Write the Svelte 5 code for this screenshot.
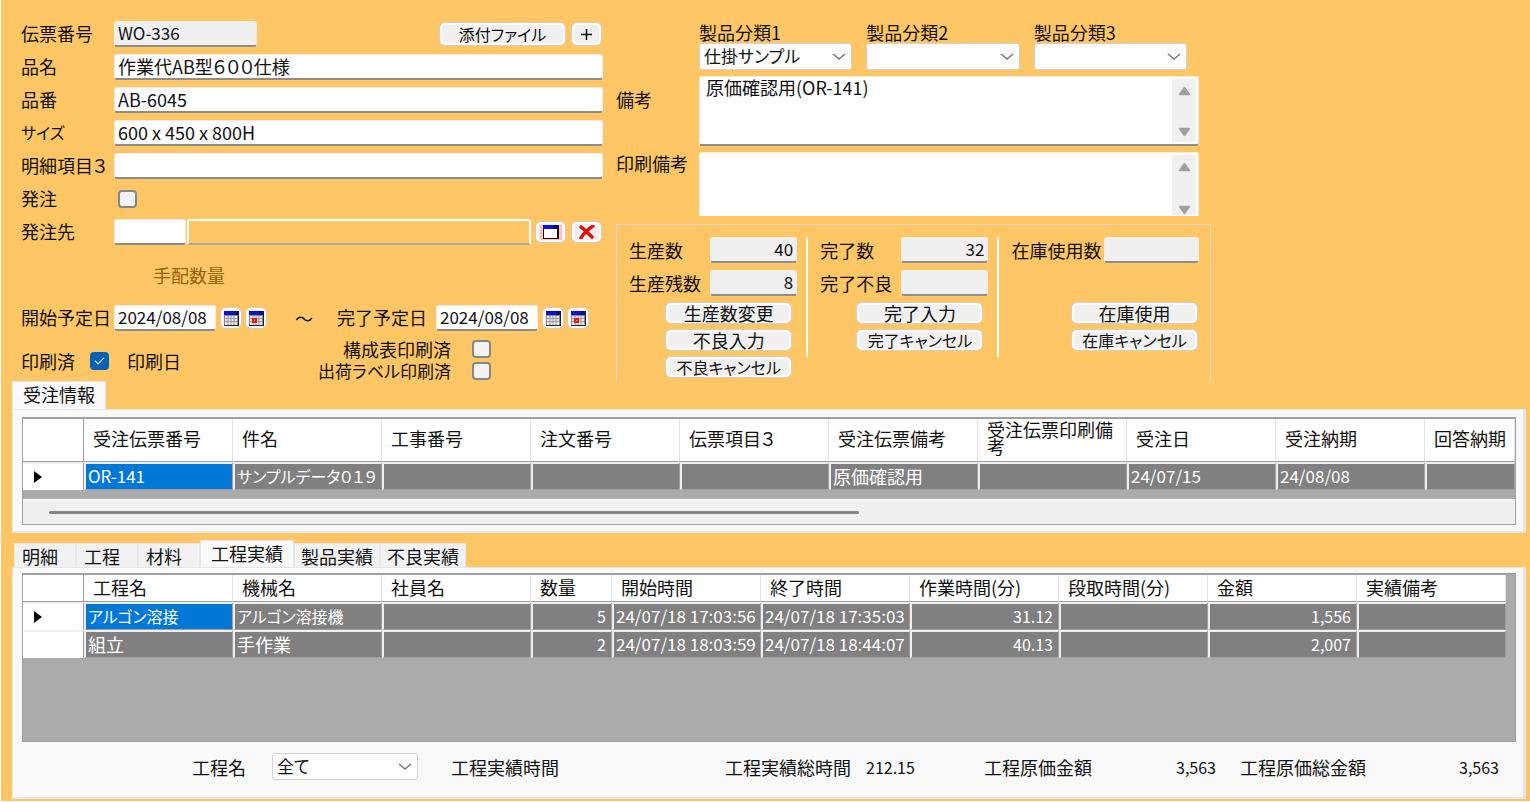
<script>
	let form = $state({
		slipNo: 'WO-336',
		name: '作業代AB型６００仕様',
		partNo: 'AB-6045',
		size: '600 x 450 x 800H',
		item3: '',
		ordered: false,
		supplierCode: '',
		supplierName: '',
		startDate: '2024/08/08',
		endDate: '2024/08/08',
		printed: true,
		bomPrinted: false,
		labelPrinted: false,
		note: '原価確認用(OR-141)',
		printNote: ''
	});

	const textRows = [
		{ key: 'name', label: '品名' },
		{ key: 'partNo', label: '品番' },
		{ key: 'size', label: 'サイズ' },
		{ key: 'item3', label: '明細項目３' }
	];

	const categories = [
		{ label: '製品分類1', value: '仕掛サンプル' },
		{ label: '製品分類2', value: '' },
		{ label: '製品分類3', value: '' }
	];

	const notes = [
		{ key: 'note', label: '備考' },
		{ key: 'printNote', label: '印刷備考' }
	];

	const groups = [
		{
			fields: [
				{ label: '生産数', value: '40' },
				{ label: '生産残数', value: '8' }
			],
			actions: ['生産数変更', '不良入力', '不良キャンセル']
		},
		{
			fields: [
				{ label: '完了数', value: '32' },
				{ label: '完了不良', value: '' }
			],
			actions: ['完了入力', '完了キャンセル']
		},
		{
			fields: [{ label: '在庫使用数', value: '' }],
			actions: ['在庫使用', '在庫キャンセル']
		}
	];

	const orderColumns = [
		'受注伝票番号',
		'件名',
		'工事番号',
		'注文番号',
		'伝票項目３',
		'受注伝票備考',
		'受注伝票印刷備考',
		'受注日',
		'受注納期',
		'回答納期'
	];
	const orderRow = ['OR-141', 'サンプルデータ０１９', '', '', '', '原価確認用', '', '24/07/15', '24/08/08', ''];

	const tabs = ['明細', '工程', '材料', '工程実績', '製品実績', '不良実績'];
	let activeTab = $state('工程実績');

	const resultColumns = [
		{ label: '工程名' },
		{ label: '機械名' },
		{ label: '社員名' },
		{ label: '数量', num: true, narrow: true },
		{ label: '開始時間' },
		{ label: '終了時間' },
		{ label: '作業時間(分)', num: true },
		{ label: '段取時間(分)', num: true },
		{ label: '金額', num: true },
		{ label: '実績備考' }
	];
	const resultRows = [
		['アルゴン溶接', 'アルゴン溶接機', '', '5', '24/07/18 17:03:56', '24/07/18 17:35:03', '31.12', '', '1,556', ''],
		['組立', '手作業', '', '2', '24/07/18 18:03:59', '24/07/18 18:44:07', '40.13', '', '2,007', '']
	];

	// katakana and latin text is set a little smaller than kanji
	const hasKana = (s) => /[\u30a1-\u30fc]/.test(s);
	const isAscii = (s) => /^[\x20-\x7e]+$/.test(s);
</script>

{#snippet chevron()}
	<svg class="chevron" width="14" height="8" viewBox="0 0 14 8" aria-hidden="true">
		<path d="M1 1l6 5 6-5" fill="none" stroke="#777" stroke-width="1.4" />
	</svg>
{/snippet}

{#snippet calendar(marked)}
	<svg width="15" height="15" viewBox="0 0 15 15" aria-hidden="true">
		<rect x="0" y="0" width="15" height="15" fill="#222" />
		<rect x="0" y="0" width="14" height="14" fill="#8c8c8c" />
		<rect x="0" y="0" width="15" height="4" fill="#0a14d8" />
		<rect x="10" y="0" width="5" height="4" fill="#06107c" />
		<path d="M1 5h12v9H1z" fill="#e6e6e6" />
		<path d="M1 7.500h12M1 10.500h12M4 5v9M7 5v9M10 5v9" stroke="#9c9c9c" stroke-width="1" />
		{#if marked}
			<rect x="3" y="7" width="5" height="5" fill="#f01818" />
			<rect x="5" y="9" width="1" height="1" fill="#ffb0b0" />
		{/if}
	</svg>
{/snippet}

{#snippet dateButtons(label)}
	<button type="button" class="btn btn-date" aria-label="{label} カレンダー">{@render calendar(false)}</button>
	<button type="button" class="btn btn-date" aria-label="{label} 今日">{@render calendar(true)}</button>
{/snippet}

<main class="page">
	<section class="top">
		<form class="left" onsubmit={(e) => e.preventDefault()}>
			<div class="row">
				<label class="caption" for="slipNo">伝票番号</label>
				<input id="slipNo" class="box readonly slip" readonly value={form.slipNo} />
				<span class="spacer"></span>
				<button type="button" class="btn btn-wide kana">添付ファイル</button>
				<button type="button" class="btn btn-plus" aria-label="追加">
					<svg width="11" height="11" viewBox="0 0 11 11"><path d="M5.5 0v11M0 5.5h11" stroke="#111" stroke-width="1.5" /></svg>
				</button>
			</div>
			{#each textRows as row}
				<div class="row">
					<label class="caption" class:kana={hasKana(row.label)} for={row.key}>{row.label}</label>
					<input id={row.key} class="box grow" bind:value={form[row.key]} />
				</div>
			{/each}
			<div class="row">
				<label class="caption" for="ordered">発注</label>
				<input id="ordered" class="check check-indent" type="checkbox" bind:checked={form.ordered} />
			</div>
			<div class="row supplier">
				<label class="caption" for="supplierCode">発注先</label>
				<input id="supplierCode" class="box code" bind:value={form.supplierCode} />
				<input class="box grow framed" aria-label="発注先名" readonly value={form.supplierName} />
				<button type="button" class="btn btn-icon" aria-label="発注先検索">
					<svg width="22" height="15" viewBox="0 0 22 15">
						<rect width="22" height="15" fill="#ffc0c0" />
						<rect x="3" y="0" width="16" height="14" fill="#111" />
						<rect x="4" y="4" width="13" height="9" fill="#fff" />
						<rect x="3" y="0" width="15" height="4" fill="#0a14e0" />
						<rect x="13" y="0" width="6" height="4" fill="#070c70" />
					</svg>
				</button>
				<button type="button" class="btn btn-icon" aria-label="発注先クリア">
					<svg width="16" height="14" viewBox="0 0 16 14">
						<path d="M2 2c3 2 6 5 11 10M14 1C9 4 5 8 2 13" fill="none" stroke="#e01010" stroke-width="3.400" stroke-linecap="round" />
					</svg>
				</button>
			</div>
			<div class="row arranged">手配数量</div>
			<div class="row">
				<label class="caption" for="startDate">開始予定日</label>
				<input id="startDate" class="box date" bind:value={form.startDate} />
				{@render dateButtons('開始予定日')}
				<span class="tilde">～</span>
				<label class="caption caption-end" for="endDate">完了予定日</label>
				<input id="endDate" class="box date" bind:value={form.endDate} />
				{@render dateButtons('完了予定日')}
			</div>
			<div class="print">
				<label class="print-main">印刷済 <input class="check" type="checkbox" bind:checked={form.printed} /></label>
				<span class="print-date">印刷日</span>
				<div class="print-flags">
					<label>構成表印刷済 <input class="check" type="checkbox" bind:checked={form.bomPrinted} /></label>
					<label>出荷ラベル印刷済 <input class="check" type="checkbox" bind:checked={form.labelPrinted} /></label>
				</div>
			</div>
		</form>

		<div class="right">
			<div class="categories">
				{#each categories as c}
					<label class="category">
						<span>{c.label}</span>
						<span class="select">
							<select>
								<option>{c.value}</option>
							</select>
							{@render chevron()}
						</span>
					</label>
				{/each}
			</div>
			{#each notes as n}
				<div class="note">
					<label for={n.key}>{n.label}</label>
					<div class="memo {n.key}">
						<textarea id={n.key} bind:value={form[n.key]}></textarea>
						<div class="memo-scroll" aria-hidden="true">
							<svg width="13" height="10" viewBox="0 0 13 10"><path d="M6.5 1.5l5 7h-10z" fill="#a0a0a0" stroke="#a0a0a0" stroke-width="1.5" stroke-linejoin="round" /></svg>
							<svg width="13" height="10" viewBox="0 0 13 10"><path d="M6.5 8.5l5-7h-10z" fill="#a0a0a0" stroke="#a0a0a0" stroke-width="1.5" stroke-linejoin="round" /></svg>
						</div>
					</div>
				</div>
			{/each}
			<div class="groups">
				{#each groups as g}
					<div class="group">
						<div class="fields">
							{#each g.fields as f}
								<label class="field">
									<span>{f.label}</span>
									<input class="box readonly" readonly value={f.value} />
								</label>
							{/each}
						</div>
						<div class="actions">
							{#each g.actions as a}
								<button type="button" class="btn btn-wide" class:kana={hasKana(a)}>{a}</button>
							{/each}
						</div>
					</div>
				{/each}
			</div>
		</div>
	</section>

	<section class="orders">
		<div class="tabs" role="tablist">
			<button type="button" class="tab active" role="tab" aria-selected="true">受注情報</button>
		</div>
		<div class="panel">
			<div class="grid">
				<table class="order-table">
					<colgroup>
						<col class="col-mark" />
						{#each orderColumns as _, i}
							<col class={i < orderColumns.length - 1 ? 'col' : ''} />
						{/each}
					</colgroup>
					<thead>
						<tr>
							<th class="mark"></th>
							{#each orderColumns as c}<th>{c}</th>{/each}
						</tr>
					</thead>
					<tbody>
						<tr>
							<td class="mark"><span class="pointer"></span></td>
							{#each orderRow as v, i}
								<td class:selected={i === 0} class:kana={hasKana(v)} class:ascii={isAscii(v)}>{v}</td>
							{/each}
						</tr>
					</tbody>
				</table>
				<div class="hscroll"><div class="thumb"></div></div>
			</div>
		</div>
	</section>

	<section class="results">
		<div class="tabs" role="tablist">
			{#each tabs as t}
				<button
					type="button"
					class="tab"
					class:active={t === activeTab}
					role="tab"
					aria-selected={t === activeTab}
					onclick={() => (activeTab = t)}>{t}</button
				>
			{/each}
		</div>
		<div class="panel">
			<div class="grid tall">
				<table>
					<colgroup>
						<col class="col-mark" />
						{#each resultColumns as c, i}
							<col class={c.narrow ? 'col-narrow' : i < resultColumns.length - 1 ? 'col' : ''} />
						{/each}
					</colgroup>
					<thead>
						<tr>
							<th class="mark"></th>
							{#each resultColumns as c}<th>{c.label}</th>{/each}
						</tr>
					</thead>
					<tbody>
						{#each resultRows as row, r}
							<tr>
								<td class="mark">{#if r === 0}<span class="pointer"></span>{/if}</td>
								{#each row as v, i}
									<td
										class:selected={r === 0 && i === 0}
										class:kana={hasKana(v)}
										class:ascii={isAscii(v)}
										class:num={resultColumns[i].num}>{v}</td
									>
								{/each}
							</tr>
						{/each}
					</tbody>
				</table>
			</div>
			<div class="summary">
				<label for="process">工程名</label>
				<span class="select">
					<select id="process">
						<option>全て</option>
					</select>
					{@render chevron()}
				</span>
				<span>工程実績時間</span>
				<span class="total">工程実績総時間 <output>212.15</output></span>
				<span class="total spread">工程原価金額 <output>3,563</output></span>
				<span class="total spread last">工程原価総金額 <output>3,563</output></span>
			</div>
		</div>
	</section>
</main>

<style>
	:global(body) {
		margin: 0;
		background: #ffc665;
	}
	.page {
		box-sizing: border-box;
		min-height: 100vh;
		padding: 21px 4px 1px 11px;
		border-left: 1px solid #fff;
		border-bottom: 1px solid #fff;
		font-family: 'Noto Sans CJK JP', sans-serif;
		font-size: 18px;
		line-height: 22px;
		font-feature-settings: 'palt';
		color: #111;
		white-space: nowrap;
	}
	.page :is(input, select, textarea, button) {
		box-sizing: border-box;
		font-family: inherit;
		font-feature-settings: inherit;
		color: inherit;
	}
	input,
	select,
	textarea,
	button {
		margin: 0;
		font-size: 18px;
		line-height: 22px;
	}

	.top {
		display: flex;
		align-items: flex-start;
		gap: 13px;
		padding-left: 9px;
	}
	.left {
		flex: 0 1 582px;
		display: flex;
		flex-direction: column;
		gap: 7px;
	}
	.row {
		display: flex;
		align-items: center;
		height: 26px;
	}
	.caption {
		flex: none;
		width: 93px;
		padding-bottom: 2px;
	}
	.caption-end {
		width: 99px;
	}
	.spacer {
		flex: 1;
	}
	.box {
		height: 26px;
		padding: 0 3px 2px;
		min-width: 0;
		border: 1px solid #ececec;
		border-bottom: 2px solid #8d8d8d;
		border-radius: 3px;
		background: #fff;
	}
	.grow {
		flex: 1;
	}
	.readonly {
		background: #f0f0f0;
		font-size: 17px;
	}
	.slip {
		width: 143px;
	}
	.code {
		width: 72px;
		margin-right: 1px;
	}
	.framed {
		background: #ffc665;
		border: 2px solid #fff;
		border-bottom: 2px solid #a8a8a8;
	}
	.date {
		width: 102px;
		margin-right: 5px;
		font-size: 17px;
	}

	.btn {
		display: flex;
		align-items: center;
		justify-content: center;
		padding: 0;
		border: 2px solid #fcfcfc;
		border-radius: 5px;
		background: #f0f0f0;
		box-shadow: 0 0 1px 1px #d9cdb8;
	}
	.btn-wide {
		width: 125px;
		height: 22px;
	}
	.btn-plus,
	.btn-icon {
		flex: none;
		width: 29px;
		height: 22px;
		margin-left: 7px;
		margin-right: 2px;
	}
	.btn-icon {
		height: 20px;
		margin-left: 5px;
	}
	.btn-date {
		flex: none;
		width: 20px;
		height: 20px;
		margin-right: 5px;
	}
	.kana {
		font-size: 16px;
	}

	.check {
		appearance: none;
		display: grid;
		place-items: center;
		width: 19px;
		height: 18px;
		border: 2px solid #868686;
		border-radius: 4px;
		background: #f3f3f3;
	}
	.check-indent {
		margin-left: 4px;
	}
	.check:checked {
		border-color: #0560b8;
		background: #0560b8;
	}
	.check:checked::after {
		content: '';
		width: 8px;
		height: 4px;
		margin-bottom: 3px;
		border-left: 1px solid #fff;
		border-bottom: 1px solid #fff;
		transform: rotate(-45deg);
	}

	.supplier {
		margin-bottom: 10px;
	}
	.arranged {
		margin-bottom: 10px;
		padding-left: 132px;
		color: #94640c;
	}
	.tilde {
		width: 66px;
		text-align: center;
	}
	.print {
		display: flex;
		align-items: center;
	}
	.print label {
		display: flex;
		align-items: center;
		justify-content: flex-end;
	}
	.print-main {
		gap: 15px;
		padding-top: 2px;
	}
	.print-date {
		width: 130px;
		padding: 2px 0 0 18px;
	}
	.print-flags {
		flex: 0 0 214px;
		margin-left: 20px;
	}
	.print-flags label {
		height: 22px;
		gap: 21px;
		font-size: 17px;
		line-height: 20px;
	}
	.print-flags label:first-child {
		font-size: 18px;
	}

	.right {
		flex: 0 1 595px;
		min-width: 0;
	}
	.categories {
		display: grid;
		grid-template-columns: repeat(3, 1fr);
		gap: 14px;
		padding: 0 24px 0 83px;
	}
	.category {
		display: flex;
		flex-direction: column;
	}
	.select {
		position: relative;
		display: block;
	}
	.select select {
		appearance: none;
		display: block;
		width: 100%;
		height: 27px;
		padding: 0 24px 2px 4px;
		border: 1px solid #d2d2d2;
		border-radius: 3px;
		background: #fdfdfd;
		font-size: 17px;
	}
	.chevron {
		position: absolute;
		right: 6px;
		top: 10px;
		pointer-events: none;
	}
	.note {
		display: flex;
		gap: 8px;
		padding: 6px 12px 0 0;
	}
	.note label {
		width: 75px;
		padding-top: 12px;
	}
	.note:nth-child(3) label {
		padding-top: 0;
	}
	.memo {
		flex: 1;
		display: flex;
		box-sizing: border-box;
		height: 70px;
		padding: 2px;
		border: 1px solid #ececec;
		border-bottom: 2px solid #8d8d8d;
		border-radius: 3px;
		background: #fff;
	}
	.printNote {
		height: 64px;
		padding-bottom: 0;
		border-bottom: 1px solid #fff;
		border-radius: 3px 3px 0 0;
	}
	.memo textarea {
		flex: 1;
		min-width: 0;
		padding: 0 4px;
		border: 0;
		resize: none;
		overflow: hidden;
		background: transparent;
		line-height: 17px;
	}
	.memo-scroll {
		display: flex;
		flex-direction: column;
		align-items: center;
		justify-content: space-between;
		width: 24px;
		padding: 7px 0 5px;
		box-sizing: border-box;
		background: #f0f0f0;
	}
	.printNote .memo-scroll {
		padding-bottom: 0;
	}

	.groups {
		display: flex;
		margin-top: 8px;
		padding: 12px 0 1px;
		border: 2px solid #dcd6cc;
		border-bottom: 0;
		border-width: 1px 1px 0;
	}
	.group {
		flex: 191;
		display: flex;
		flex-direction: column;
		gap: 7px;
		height: 120px;
		padding: 0 9px 0 12px;
		border-right: 2px solid #fff;
		margin-bottom: 24px;
		box-sizing: border-box;
	}
	.group:last-child {
		flex: 213;
		padding-right: 11px;
		border-right: 0;
	}
	.fields {
		display: flex;
		flex-direction: column;
		gap: 7px;
		flex: none;
		height: 59px;
	}
	.field {
		display: flex;
		align-items: center;
		justify-content: space-between;
	}
	.field .box {
		width: 87px;
		text-align: right;
	}
	.group:last-child .box {
		width: 95px;
	}
	.actions {
		display: flex;
		flex-direction: column;
		align-items: flex-end;
		gap: 7px;
		padding-right: 6px;
	}
	.group:last-child .actions {
		padding-right: 2px;
	}
	.actions .btn {
		flex: none;
		height: 20px;
		padding-bottom: 1px;
	}

	.tabs {
		display: flex;
		align-items: flex-end;
		height: 28px;
	}
	.tab {
		height: 24px;
		padding: 0 6px;
		border: 1px solid #e6e6e6;
		border-bottom: 0;
		background: #f2f2f2;
	}
	.tab.active {
		height: 100%;
		padding: 0 10px 3px;
		background: #f9f9f9;
	}
	.orders .tabs {
		margin-top: -1px;
	}
	.results .tabs {
		height: 27px;
		padding-left: 2px;
		margin-top: 7px;
	}
	.results .tab:nth-child(-n + 3) {
		min-width: 62px;
		padding-right: 16px;
	}
	.panel {
		padding: 7px 7px 6px 9px;
		border: 1px solid #e4e4ea;
		border-width: 1px 3px 2px 1px;
		background: #f9f9f9;
	}

	.grid {
		border: 1px solid #a0a0a8;
		border-top: 2px solid #a0a0a0;
		background: #ababab;
		overflow: hidden;
	}
	.tall {
		height: 166px;
		padding-right: 9px;
	}
	table {
		width: 100%;
		table-layout: fixed;
		border-collapse: separate;
		border-spacing: 0;
	}
	.col-mark {
		width: 61px;
	}
	.col {
		width: 149px;
	}
	.col-narrow {
		width: 81px;
	}
	th {
		height: 27px;
		box-sizing: border-box;
		padding: 0 8px 1px 9px;
		border-right: 1px solid #e2e2e2;
		border-bottom: 1px solid #a0a0a0;
		background: #fff;
		font-weight: normal;
		text-align: left;
		line-height: 17px;
	}
	th:last-child {
		padding-right: 0;
	}
	.order-table th {
		height: 43px;
		padding-bottom: 4px;
		white-space: normal;
	}
	td {
		height: 28px;
		box-sizing: border-box;
		padding: 0 5px 2px 2px;
		border: 1px solid #a0a0a0;
		border-top: 2px solid #efefef;
		border-left: 2px solid #efefef;
		background: #808080;
		color: #fff;
		line-height: 22px;
	}
	td.ascii {
		font-size: 17px;
	}
	td.num {
		font-size: 16px;
		text-align: right;
	}
	td.selected {
		background: #0078d7;
	}
	th.mark,
	td.mark {
		padding: 0 0 0 9px;
		border-right: 1px solid #a0a0a0;
		background: #fff;
	}
	td.mark {
		border-left-color: #fff;
		border-bottom-color: #fff;
	}
	.pointer {
		display: block;
		width: 0;
		height: 0;
		border: 6px solid transparent;
		border-left: 8px solid #000;
		border-right: 0;
	}
	.hscroll {
		margin-top: 9px;
		padding: 11px 44% 10px 26px;
		border-top: 1px solid #fff;
		background: #f0f0f0;
	}
	.thumb {
		height: 3px;
		border-radius: 2px;
		background: #858585;
	}

	.results .panel {
		padding-top: 5px;
		padding-bottom: 17px;
	}
	.summary {
		display: grid;
		grid-template-columns: 80fr 179fr 274fr 259fr 256fr 259fr;
		align-items: center;
		padding: 11px 17px 0 170px;
	}
	.summary .select {
		width: 146px;
	}
	.total {
		display: flex;
		gap: 15px;
	}
	.total output {
		font-size: 16px;
	}
	.spread {
		justify-content: space-between;
		padding-right: 24px;
	}
	.last {
		padding-right: 0;
	}
</style>
